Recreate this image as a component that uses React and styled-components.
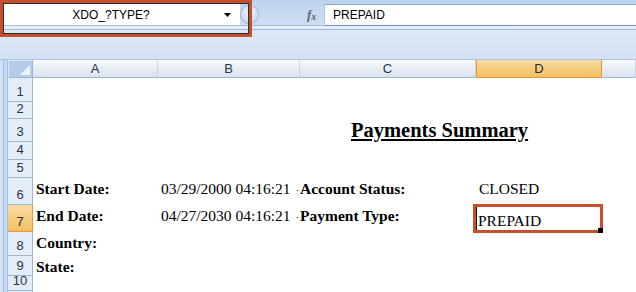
import React from 'react';
import styled, { createGlobalStyle, css } from 'styled-components';

const GlobalStyle = createGlobalStyle`
  html, body {
    margin: 0;
    padding: 0;
    background: #fff;
  }
  body {
    width: 636px;
    height: 292px;
    overflow: hidden;
  }
`;

const Window = styled.div`
  position: relative;
  width: 636px;
  height: 292px;
  overflow: hidden;
  display: flex;
  flex-direction: column;
  font-family: 'Liberation Sans', Arial, sans-serif;
`;

const TopBar = styled.div`
  box-sizing: border-box;
  flex-shrink: 0;
  height: 30px;
  padding-top: 4px;
  display: flex;
  align-items: flex-start;
  background: linear-gradient(#bcd2ee, #d2e1f4);
  border-bottom: 1px solid #9fb9dd;
  box-shadow: inset 0 -3px 0 #e6eef9, inset 0 -4px 0 #a7bfe0;
`;

const NameBox = styled.div`
  box-sizing: border-box;
  width: 240px;
  height: 21px;
  display: flex;
  align-items: center;
  background: #fff;
`;

const NameText = styled.span`
  flex: 1;
  text-align: center;
  font-size: 12px;
  color: #000;
`;

const Arrow = styled.span`
  width: 16px;
  display: flex;
  justify-content: flex-start;
  padding-left: 2px;
`;

const Knob = styled.div`
  box-sizing: border-box;
  width: 19px;
  height: 19px;
  margin-top: 1px;
  border-radius: 50%;
  border: 1px solid #9fb6d6;
  background: radial-gradient(circle at 50% 35%, #eef4fc, #bfd2ec);
`;

const Fx = styled.span`
  margin-left: 48px;
  width: 16px;
  height: 21px;
  display: flex;
  align-items: center;
  font-family: 'Liberation Serif', 'Times New Roman', serif;
  font-style: italic;
  font-weight: bold;
  color: #5f6570;
  font-size: 13px;

  small {
    font-size: 10px;
    margin-top: 3px;
  }
`;

const FormulaInput = styled.div`
  box-sizing: border-box;
  flex: 1;
  height: 22px;
  margin-left: 1px;
  padding-left: 8px;
  display: flex;
  align-items: center;
  background: #fff;
  border-left: 1px solid #b3c4db;
  border-top: 1px solid #8aa6cd;
  border-bottom: 1px solid #7391bb;
  font-size: 12px;
  color: #000;
`;

const Band = styled.div`
  box-sizing: border-box;
  flex-shrink: 0;
  height: 30px;
  background: linear-gradient(#dfe9f6, #d3e1f4);
  border-bottom: 1px solid #a9c3e6;
`;

const Sheet = styled.div`
  flex: 1;
  min-height: 0;
  display: flex;
  align-items: flex-start;
`;

const LeftStrip = styled.div`
  align-self: stretch;
  width: 8px;
  background: linear-gradient(
    to right,
    #d3e3f5 0 3px,
    #9fbde5 3px 4px,
    #c6daf1 4px 7px,
    #a9c4e6 7px 8px
  );
`;

const Grid = styled.div`
  flex: 1;
  align-self: stretch;
  display: grid;
  grid-template-columns: 25px 125px 142px 176px 126px 1fr;
  grid-template-rows: ${(p) => p.$rows};
  background: linear-gradient(to right, #e4ecf7 0 24px, #9eb6ce 24px 25px, #fff 25px);
`;

const Corner = styled.div`
  position: relative;
  box-sizing: border-box;
  background: #b6cbea;
  border: 1px solid #dfe8f5;
  border-right-color: #9eb6ce;
  border-bottom-color: #9eb6ce;

  &::after {
    content: '';
    position: absolute;
    right: 2px;
    bottom: 2px;
    border-style: solid;
    border-width: 0 0 10px 10px;
    border-color: transparent transparent #eef3fa transparent;
  }
`;

const activeHead = css`
  background: linear-gradient(#f9dca6, #f5cb7e 55%, #f1c262);
  border-color: #f29536;
  color: #2a2a2a;
`;

const ColHead = styled.div`
  box-sizing: border-box;
  display: flex;
  align-items: center;
  justify-content: center;
  font-size: 13px;
  color: #27354b;
  background: linear-gradient(#f9fbfd, #e6ebf4 55%, #dbe2ee);
  border-right: 1px solid #c9d5e5;
  border-bottom: 1px solid #9eb6ce;
  ${(p) => p.$active && activeHead}
  ${(p) => p.$active && 'border-left: 1px solid #f29536;'}
`;

const RowHead = styled.div`
  box-sizing: border-box;
  display: flex;
  align-items: flex-end;
  justify-content: center;
  padding-bottom: 2px;
  font-size: 13px;
  line-height: 15px;
  color: #27354b;
  background: #e4ecf7;
  border-right: 1px solid #9eb6ce;
  border-bottom: 1px solid #9eb6ce;
  ${(p) => p.$active && activeHead}
`;

const Cell = styled.div`
  box-sizing: border-box;
  min-width: 0;
  display: flex;
  justify-content: space-between;
  align-items: flex-start;
  padding: ${(p) => p.$pt ?? 2}px 1px 0 ${(p) => p.$pl ?? 3}px;
  font-family: 'Liberation Serif', 'Times New Roman', serif;
  font-size: ${(p) => p.$size ?? 15.5}px;
  line-height: ${(p) => (p.$size ? 23 : 18)}px;
  font-weight: ${(p) => (p.$bold ? 'bold' : 'normal')};
  text-decoration: ${(p) => (p.$under ? 'underline' : 'none')};
  text-underline-offset: 2px;
  white-space: nowrap;
  color: #000;
`;

const Cut = styled.span`
  font-size: 10px;
  line-height: 22px;
`;

const Highlight = styled.div`
  position: absolute;
  box-sizing: border-box;
  left: ${(p) => p.$x}px;
  top: ${(p) => p.$y}px;
  width: ${(p) => p.$w}px;
  height: ${(p) => p.$h}px;
  border: 3px solid #c4502c;
  box-shadow: ${(p) => p.$inner};
  pointer-events: none;
`;

const FillHandle = styled.span`
  position: absolute;
  right: -3px;
  bottom: -3px;
  width: 5px;
  height: 5px;
  background: #000;
`;

const cols = ['A', 'B', 'C', 'D', 'E'];

const rows = [
  { n: 1, h: 24 },
  { n: 2, h: 17 },
  {
    n: 3,
    h: 23,
    cells: { C: { text: 'Payments Summary', bold: true, under: true, size: 20.5, pt: 0, pl: 51 } },
  },
  { n: 4, h: 18 },
  { n: 5, h: 18 },
  {
    n: 6,
    h: 27,
    cells: {
      A: { text: 'Start Date:', bold: true },
      B: { text: '03/29/2000 04:16:21', cut: true },
      C: { text: 'Account Status:', bold: true, pl: 0 },
      D: { text: 'CLOSED' },
    },
  },
  {
    n: 7,
    h: 27,
    active: true,
    cells: {
      A: { text: 'End Date:', bold: true },
      B: { text: '04/27/2030 04:16:21', cut: true },
      C: { text: 'Payment Type:', bold: true, pl: 0 },
      D: { text: 'PREPAID', pt: 7, pl: 2 },
    },
  },
  { n: 8, h: 24, cells: { A: { text: 'Country:', bold: true } } },
  { n: 9, h: 20, cells: { A: { text: 'State:', bold: true } } },
  { n: 10, h: 15 },
];

const DropArrow = () => (
  <svg width="7" height="4" viewBox="0 0 7 4">
    <path d="M0 0 H7 L3.5 4 Z" fill="#000" />
  </svg>
);

export default function App() {
  const template = ['18px', ...rows.map((r) => `${r.h}px`)].join(' ');
  return (
    <>
      <GlobalStyle />
      <Window>
        <TopBar>
          <NameBox>
            <NameText>XDO_?TYPE?</NameText>
            <Arrow>
              <DropArrow />
            </Arrow>
          </NameBox>
          <Knob />
          <Fx>
            f<small>x</small>
          </Fx>
          <FormulaInput>PREPAID</FormulaInput>
        </TopBar>
        <Band />
        <Sheet>
          <LeftStrip />
          <Grid $rows={template}>
            <Corner />
            {cols.map((c) => (
              <ColHead key={c} $active={c === 'D'}>
                {c === 'E' ? '' : c}
              </ColHead>
            ))}
            {rows.map((r) => (
              <React.Fragment key={r.n}>
                <RowHead $active={r.active}>{r.n}</RowHead>
                {cols.map((c) => {
                  const cell = r.cells && r.cells[c];
                  if (!cell) return <Cell key={c} />;
                  return (
                    <Cell
                      key={c}
                      $bold={cell.bold}
                      $under={cell.under}
                      $size={cell.size}
                      $pt={cell.pt}
                      $pl={cell.pl}
                    >
                      <span>{cell.text}</span>
                      {cell.cut && <Cut>·</Cut>}
                    </Cell>
                  );
                })}
              </React.Fragment>
            ))}
          </Grid>
        </Sheet>
        <Highlight $x={0} $y={0} $w={252} $h={37} $inner="inset 0 0 0 1px #2e2e2e" />
        <Highlight $x={473} $y={204} $w={130} $h={29} $inner="inset 1px 0 0 #111">
          <FillHandle />
        </Highlight>
      </Window>
    </>
  );
}
